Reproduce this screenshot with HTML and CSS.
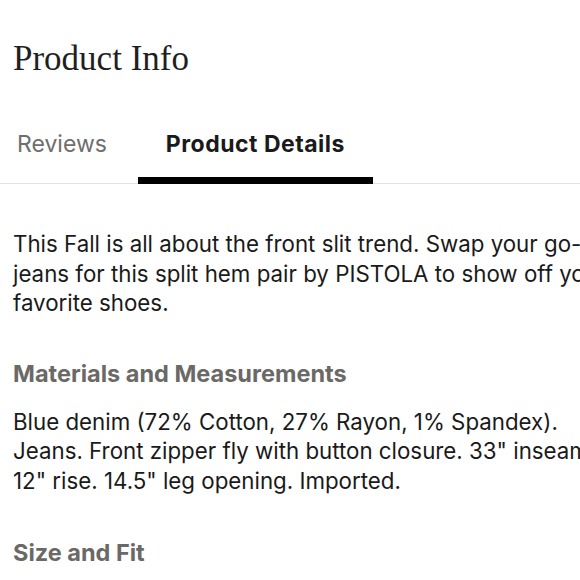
FILE: index.html
```html
<!DOCTYPE html>
<html>
<head>
<meta charset="utf-8">
<link rel="stylesheet" href="styles.css">
</head>
<body>
<div class="page">
  <h1 class="title">Product Info</h1>
  <nav class="tabs">
    <div class="tab">Reviews</div>
    <div class="tab active">Product Details</div>
  </nav>
  <div class="content">
    <p class="text">This Fall is all about the front slit trend. Swap your go-to<br>jeans for this split hem pair by PISTOLA to show off your<br>favorite shoes.</p>
    <h2 class="heading">Materials and Measurements</h2>
    <p class="text">Blue denim (72% Cotton, 27% Rayon, 1% Spandex).<br>Jeans. Front zipper fly with button closure. 33" inseam.<br>12" rise. 14.5" leg opening. Imported.</p>
    <h2 class="heading heading-last">Size and Fit</h2>
  </div>
</div>
</body>
</html>
```
FILE: styles.css
```css
html, body {
  margin: 0;
  padding: 0;
  background: #fff;
  overflow: hidden;
}
.page {
  width: 580px;
  height: 580px;
  overflow: hidden;
}
.title {
  margin: 0;
  padding: 38px 0 0 13px;
  height: 42px;
  font-family: "Liberation Serif", serif;
  font-weight: normal;
  font-size: 35px;
  line-height: 42px;
  color: #1f1f1f;
}
.tabs {
  display: flex;
  align-items: flex-start;
  height: 59px;
  margin-top: 44px;
  padding-left: 17px;
  border-bottom: 1px solid #e2e2e2;
  font-family: Inter, "Liberation Sans", sans-serif;
  font-size: 23px;
}
.tab {
  padding: 6px 31px 0 0;
  height: 59px;
  line-height: 28px;
  white-space: nowrap;
  color: #6e6e6e;
  box-sizing: border-box;
}
.tab.active {
  padding: 6px 0 0;
  height: 60px;
  width: 235px;
  text-align: center;
  font-weight: 700;
  letter-spacing: 0.5px;
  color: #1a1a1a;
  border-bottom: 7px solid #000;
}
.content {
  padding: 45px 0 0 13px;
  font-family: Inter, "Liberation Sans", sans-serif;
  color: #1a1a1a;
}
.text {
  margin: 0;
  white-space: nowrap;
  font-size: 22.3px;
  line-height: 29.5px;
}
.heading {
  margin: 42px 0 19px;
  font-size: 23.5px;
  line-height: 28px;
  font-weight: 700;
  color: #6b6966;
}
.heading-last {
  margin-top: 44px;
}
```
